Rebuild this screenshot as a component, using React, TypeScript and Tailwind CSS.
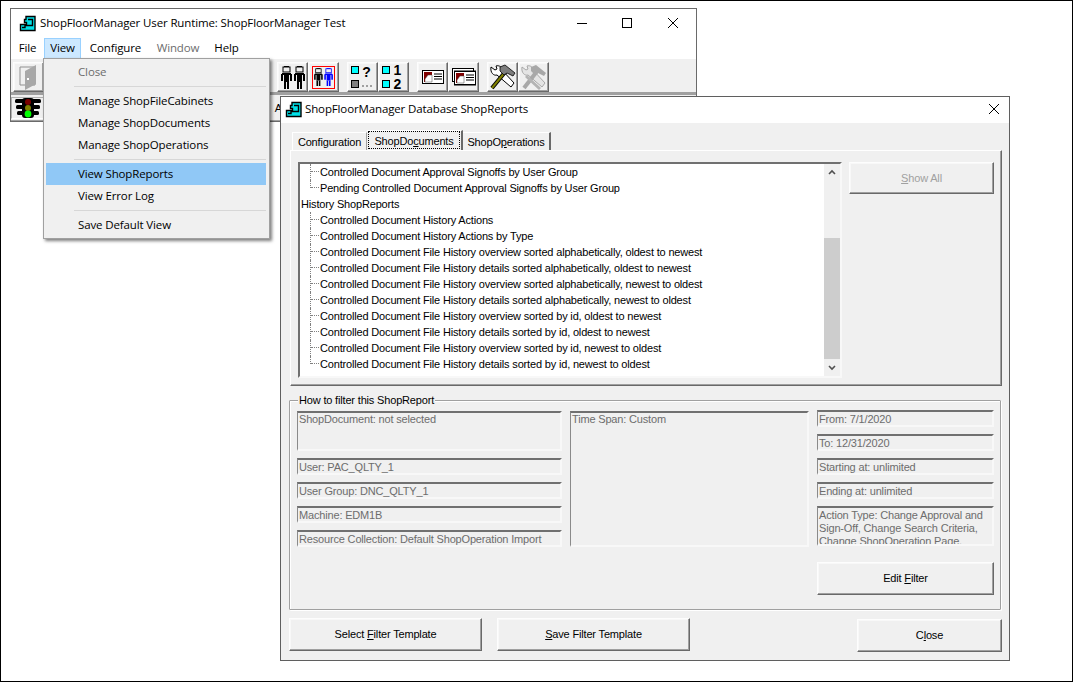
import React from 'react';

const raised = 'border border-t-[#fdfdfd] border-l-[#fdfdfd] border-r-[#696969] border-b-[#696969] shadow-[inset_-1px_-1px_0_#a0a0a0,inset_1px_1px_0_#f8f8f8] bg-[#f0f0f0]';
const sunken = 'border-2 border-t-[#707070] border-l-[#8a8a8a] border-r-[#f8f8f8] border-b-[#f8f8f8] border-l-[1.5px]';
const uiFont = "font-['Open_Sans',sans-serif] text-[11.500px] tracking-[-0.130px]";

const AppIcon: React.FC = () => (
    <svg width="18" height="17" viewBox="0 0 18 17" className="shrink-0">
        <path d="M7 1.5h9v14H1.5v-6h6v-2h-2V4.500h1.500z" fill="#00e0e8" stroke="#000" strokeWidth="1.4" />
        <path d="M9 4.500h4.500v6H6v2H3" fill="none" stroke="#000" strokeWidth="1.400" />
    </svg>
);

const Person: React.FC<{ color?: string }> = ({ color = '#000' }) => (
    <g fill={color}>
        <rect x="3" y="0" width="5" height="1" />
        <rect x="2" y="1" width="7" height="5" fill="none" stroke={color} strokeWidth="1" />
        <rect x="1" y="7" width="9" height="2" />
        <rect x="0" y="8" width="2" height="7" />
        <rect x="9" y="8" width="2" height="7" />
        <rect x="3" y="8" width="5" height="8" />
        <rect x="3" y="16" width="2" height="7" />
        <rect x="6" y="16" width="2" height="7" />
    </g>
);

const People: React.FC = () => (
    <svg width="24" height="23" viewBox="0 0 24 23">
        <Person />
        <g transform="translate(13 0)"><Person /></g>
    </svg>
);

const PeopleSelected: React.FC = () => (
    <span className="flex h-[23px] w-[23px] items-center justify-center border border-[#ff0000]">
        <svg width="19" height="18" viewBox="0 0 24 23">
            <Person />
            <g transform="translate(13 0)"><Person color="#0000ff" /></g>
        </svg>
    </span>
);

const Square: React.FC<{ color: string }> = ({ color }) => (
    <span className={`block h-[8px] w-[8px] border border-black ${color}`} />
);

const QuestionIcon: React.FC = () => (
    <span className="flex h-[24px] w-[24px] gap-[3px] font-['Liberation_Sans',sans-serif] font-bold tracking-normal">
        <span className="flex flex-col justify-between py-[1px]">
            <Square color="bg-[#00ffff]" />
            <Square color="bg-[#808080]" />
        </span>
        <span className="flex flex-col items-center justify-between">
            <span className="text-[14px] leading-[14px]">?</span>
            <span className="flex gap-[2px] pb-[2px]">
                <span className="h-[2px] w-[2px] bg-[#a0a0a0]" />
                <span className="h-[2px] w-[2px] bg-[#a0a0a0]" />
                <span className="h-[2px] w-[2px] bg-[#a0a0a0]" />
            </span>
        </span>
    </span>
);

const NumberIcon: React.FC = () => (
    <span className="flex h-[28px] w-[24px] gap-[4px] font-['Liberation_Sans',sans-serif] font-bold tracking-normal">
        <span className="flex flex-col justify-between py-[3px]">
            <Square color="bg-[#00ffff]" />
            <Square color="bg-[#00ffff]" />
        </span>
        <span className="flex flex-col">
            <span className="text-[14px] leading-[14px]">1</span>
            <span className="text-[14px] leading-[14px]">2</span>
        </span>
    </span>
);

const Card: React.FC = () => (
    <g>
        <rect x="0.500" y="0.500" width="21" height="13" fill="#fff" stroke="#000" />
        <rect x="2" y="2" width="8" height="10" fill="#800000" />
        <path d="M6 5h4v7H3V9z" fill="#fff" stroke="#444" strokeWidth="0.500" />
        <path d="M12 4h8M12 6.500h8M12 9h8" stroke="#000" strokeWidth="1" />
    </g>
);

const CardIcon: React.FC = () => (
    <svg width="22" height="14" viewBox="0 0 22 14"><Card /></svg>
);

const CardsIcon: React.FC = () => (
    <svg width="24" height="18" viewBox="0 0 24 18">
        <rect x="0.500" y="0.500" width="21" height="13" fill="#fff" stroke="#000" />
        <rect x="2.500" y="3" width="21" height="14" fill="#fff" stroke="#000" />
        <g transform="translate(2 3)"><Card /></g>
    </svg>
);

const ToolsIcon: React.FC = () => (
    <svg width="27" height="27" viewBox="0 0 27 27">
        <path d="M2 3l4 3 2-1-1-3c3-1 6 1 6 4l12 13-3 4L8 11C5 12 1 9 2 3z" fill="#fff" stroke="#000" />
        <path d="M3 24L17 7" stroke="#000" strokeWidth="4" />
        <path d="M3 24L17 7" stroke="#808000" strokeWidth="2" />
        <path d="M11 3l5-2 10 8-2 3-6-3-3 2-4-4z" fill="#7d7d7d" stroke="#000" strokeWidth="0.800" />
    </svg>
);

const ToolsDisabledIcon: React.FC = () => (
    <svg width="27" height="27" viewBox="0 0 27 27">
        <path d="M2 3l4 3 2-1-1-3c3-1 6 1 6 4l12 13-3 4L8 11C5 12 1 9 2 3z" fill="#e4e4e4" stroke="#a8a8a8" />
        <path d="M4 24L18 6" stroke="#a8a8a8" strokeWidth="4" />
        <path d="M6 12L20 25" stroke="#b4b4b4" strokeWidth="3" />
        <path d="M11 3l5-2 10 8-2 3-6-3-3 2-4-4z" fill="#a8a8a8" />
    </svg>
);

const DoorIcon: React.FC = () => (
    <svg width="20" height="27" viewBox="0 0 20 27">
        <path d="M1 3h15v18H1z" fill="#f0f0f0" stroke="#909090" />
        <path d="M6 7l11-6v19l-11 6z" fill="#a8a8a8" />
        <rect x="8" y="14" width="2" height="2" fill="#fff" />
    </svg>
);

const TrafficLight: React.FC = () => (
    <svg width="26" height="20" viewBox="0 0 26 20">
        <rect x="0" y="1" width="26" height="4" rx="1.500" fill="#000" />
        <rect x="1" y="7" width="24" height="4" rx="1.500" fill="#000" />
        <rect x="2" y="13" width="22" height="4" rx="1.500" fill="#000" />
        <rect x="7" y="0" width="12" height="20" rx="3" fill="#000" />
        <circle cx="13" cy="4" r="3" fill="#7a0000" />
        <circle cx="13" cy="10" r="3" fill="#7f7f00" />
        <circle cx="13" cy="16" r="3.400" fill="#00ff00" />
    </svg>
);

const CloseGlyph: React.FC = () => (
    <svg width="10" height="10" viewBox="0 0 10 10"><path d="M0 0l10 10M10 0L0 10" stroke="#000" strokeWidth="1" /></svg>
);

const ToolButton: React.FC<{ className?: string; children: React.ReactNode }> = ({ className = '', children }) => (
    <div className={`${raised} flex h-[30px] w-[31px] shrink-0 items-center justify-center ${className}`}>{children}</div>
);

const MenuItem: React.FC<{ label: string; disabled?: boolean; active?: boolean }> = ({ label, disabled, active }) => (
    <div className={`flex h-[22px] items-center pl-[32px] ${active ? 'bg-[#90c8f6]' : ''} ${disabled ? 'text-[#6d6d6d]' : 'text-black'}`}>{label}</div>
);

const MenuSeparator: React.FC = () => (
    <div className="flex h-[7px] items-center pl-[28px]"><div className="h-px w-full bg-[#d7d7d7]" /></div>
);

const TreeChild: React.FC<{ label: string; last?: boolean }> = ({ label, last }) => (
    <div className="flex h-[16px] items-stretch pl-[10px]">
        <span className={`w-[9px] shrink-0 border-l border-dotted border-[#808080] ${last ? 'h-[8px]' : ''}`}>
            <span className="block h-[8px] border-b border-dotted border-[#808080]" />
        </span>
        <span className="whitespace-nowrap pl-[1px] leading-[16px]">{label}</span>
    </div>
);

const Field: React.FC<{ className?: string; children: React.ReactNode }> = ({ className = '', children }) => (
    <div className={`${sunken} overflow-hidden px-px text-[#6d6d6d] ${className}`}>{children}</div>
);

const DialogButton: React.FC<{ className?: string; disabled?: boolean; children: React.ReactNode }> = ({ className = '', disabled, children }) => (
    <div className={`${raised} flex items-center justify-center ${disabled ? 'text-[#a0a0a0]' : 'text-black'} ${className}`}>
        <span>{children}</span>
    </div>
);

const historyReports = [
    'Controlled Document History Actions',
    'Controlled Document History Actions by Type',
    'Controlled Document File History overview sorted alphabetically, oldest to newest',
    'Controlled Document File History details sorted alphabetically, oldest to newest',
    'Controlled Document File History overview sorted alphabetically, newest to oldest',
    'Controlled Document File History details sorted alphabetically, newest to oldest',
    'Controlled Document File History overview sorted by id, oldest to newest',
    'Controlled Document File History details sorted by id, oldest to newest',
    'Controlled Document File History overview sorted by id, newest to oldest',
    'Controlled Document File History details sorted by id, newest to oldest',
];

const App: React.FC = () => {
    return (
        <div className="relative h-[682px] w-[1073px] overflow-hidden border border-black bg-white font-['Liberation_Sans',sans-serif] text-[11px] tracking-[-0.170px] text-black">
            {/* Main runtime window */}
            <div className={`absolute left-[9px] top-[7px] flex h-[114px] w-[687px] flex-col border border-[#6a6a6a] bg-white ${uiFont}`}>
                <div className="flex h-[27px] shrink-0 items-center pl-[8px] pt-[1px]">
                    <AppIcon />
                    <span className="ml-[3px]">ShopFloorManager User Runtime: ShopFloorManager Test</span>
                    <div className="ml-auto flex items-center">
                        <div className="h-px w-[10px] bg-black" />
                        <div className="ml-[35px] h-[10px] w-[10px] border border-black" />
                        <div className="ml-[36px] mr-[18px]"><CloseGlyph /></div>
                    </div>
                </div>
                <div className="flex h-[23px] shrink-0 items-stretch pt-[2px]">
                    <div className="flex w-[33px] items-center justify-center pb-[2px]">File</div>
                    <div className="flex w-[37px] items-center justify-center border border-[#99d1ff] bg-[#cce8ff] pb-[2px]">View</div>
                    <div className="flex w-[69px] items-center justify-center pb-[2px]">Configure</div>
                    <div className="flex w-[56px] items-center justify-center pb-[2px] text-[#6d6d6d]">Window</div>
                    <div className="flex w-[41px] items-center justify-center pb-[2px]">Help</div>
                </div>
                <div className="flex flex-1 flex-col bg-[#f0f0f0]">
                    <div className="flex h-[33px] shrink-0 items-start pl-[2px] pt-[3px]">
                        <ToolButton><DoorIcon /></ToolButton>
                        <ToolButton className="ml-[233px]"><People /></ToolButton>
                        <ToolButton><PeopleSelected /></ToolButton>
                        <ToolButton className="ml-[8px]"><QuestionIcon /></ToolButton>
                        <ToolButton><NumberIcon /></ToolButton>
                        <ToolButton className="ml-[8px]"><CardIcon /></ToolButton>
                        <ToolButton><CardsIcon /></ToolButton>
                        <ToolButton className="ml-[8px]"><ToolsIcon /></ToolButton>
                        <ToolButton><ToolsDisabledIcon /></ToolButton>
                    </div>
                    <div className="h-[3px] shrink-0 bg-[#a0a0a0]" />
                    <div className="flex flex-1 items-stretch pb-[1px] pt-[2px]">
                        <div className="flex w-[33px] items-center justify-center border border-t-[#b0b0b0] border-l-[#b0b0b0] border-r-white border-b-white">
                            <TrafficLight />
                        </div>
                        <div className="ml-auto mr-[414px] self-center font-['Liberation_Sans',sans-serif] text-[11px]">A</div>
                    </div>
                    <div className="h-[1px] shrink-0 bg-[#a0a0a0]" />
                </div>
            </div>

            {/* View menu */}
            <div className={`absolute left-[42px] top-[57px] z-20 h-[181px] w-[227px] border border-[#a0a0a0] bg-[#f0f0f0] py-[2px] pl-[2px] pr-[3px] shadow-[2px_2px_3px_rgba(0,0,0,0.5)] ${uiFont}`}>
                <MenuItem label="Close" disabled />
                <MenuSeparator />
                <MenuItem label="Manage ShopFileCabinets" />
                <MenuItem label="Manage ShopDocuments" />
                <MenuItem label="Manage ShopOperations" />
                <MenuSeparator />
                <MenuItem label="View ShopReports" active />
                <MenuItem label="View Error Log" />
                <MenuSeparator />
                <MenuItem label="Save Default View" />
            </div>

            {/* ShopReports dialog */}
            <div className="absolute left-[279px] top-[95px] z-10 flex h-[565px] w-[730px] flex-col border border-[#5f5f5f] bg-[#f0f0f0]">
                <div className={`flex h-[26px] shrink-0 items-center bg-white pb-[2px] pl-[4px] ${uiFont}`}>
                    <AppIcon />
                    <span className="ml-[2px]">ShopFloorManager Database ShopReports</span>
                    <div className="ml-auto mr-[10px]"><CloseGlyph /></div>
                </div>

                {/* Tabs */}
                <div className="mt-[7px] flex h-[20px] shrink-0 items-end pl-[11px]">
                    <div className="flex h-[18px] w-[75px] items-center justify-center border-l border-t border-r border-l-white border-t-white border-r-[#a0a0a0] pt-[2px]">Configuration</div>
                    <div className="flex h-[20px] w-[96px] items-center justify-center border-r-2 border-t border-t-white border-r-[#696969] px-[1px] pb-[1px]">
                        <span className="flex h-full w-full items-center justify-center border border-dotted border-black pt-[2px]">ShopDo<u>c</u>uments</span>
                    </div>
                    <div className="flex h-[18px] w-[88px] items-center justify-center border-r-2 border-t border-t-white border-r-[#696969] pt-[2px]">ShopO<u>p</u>erations</div>
                </div>

                <div className="ml-[9px] flex h-[236px] w-[712px] shrink-0 gap-[7px] border border-t-white border-l-white border-r-[#696969] border-b-[#696969] pl-[7px] pt-[11px] shadow-[inset_-1px_-1px_0_#a0a0a0]">
                    {/* Report tree */}
                    <div className="flex h-[216px] w-[544px] shrink-0 border-2 border-t-[#707070] border-l-[#707070] border-r-[#f8f8f8] border-b-[#f8f8f8] bg-white">
                        <div className="min-w-0 flex-1 overflow-hidden">
                            <TreeChild label="Controlled Document Approval Signoffs by User Group" />
                            <TreeChild label="Pending Controlled Document Approval Signoffs by User Group" last />
                            <div className="h-[16px] pl-[1px] leading-[16px]">History ShopReports</div>
                            {historyReports.map((report, i) => (
                                <TreeChild key={report} label={report} last={i === historyReports.length - 1} />
                            ))}
                        </div>
                        <div className="flex w-[16px] shrink-0 flex-col bg-[#f0f0f0]">
                            <div className="flex h-[17px] items-center justify-center">
                                <svg width="8" height="6" viewBox="0 0 8 6"><path d="M1 5l3-3 3 3" fill="none" stroke="#505050" strokeWidth="1.600" /></svg>
                            </div>
                            <div className="mt-[57px] h-[122px] bg-[#cdcdcd]" />
                            <div className="mt-auto flex h-[17px] items-center justify-center">
                                <svg width="8" height="6" viewBox="0 0 8 6"><path d="M1 1l3 3 3-3" fill="none" stroke="#505050" strokeWidth="1.600" /></svg>
                            </div>
                        </div>
                    </div>
                    <DialogButton disabled className="h-[32px] w-[145px]"><u>S</u>how All</DialogButton>
                </div>

                {/* Filter group */}
                <div className="relative ml-[8px] mt-[14px] h-[210px] w-[712px] shrink-0 rounded-[1px] border border-[#a0a0a0] shadow-[inset_1px_1px_0_#fff,1px_1px_0_#fff]">
                    <div className="absolute left-[8px] top-[-8px] bg-[#f0f0f0] px-px leading-[14px]">How to filter this ShopReport</div>
                    <div className="grid grid-cols-[265px_239px_177px] gap-x-[8px] pl-[7px] pt-[10px]">
                        <div className="flex flex-col">
                            <Field className="h-[40px] leading-[13px]">ShopDocument: not selected</Field>
                            <Field className="mt-[7px] h-[17px] leading-[14px]">User: PAC_QLTY_1</Field>
                            <Field className="mt-[7px] h-[17px] leading-[14px]">User Group: DNC_QLTY_1</Field>
                            <Field className="mt-[7px] h-[17px] leading-[14px]">Machine: EDM1B</Field>
                            <Field className="mt-[7px] h-[17px] leading-[14px]">Resource Collection: Default ShopOperation Import</Field>
                        </div>
                        <Field className="h-[136px] leading-[13px]">Time Span: Custom</Field>
                        <div className="-mt-[1px] flex flex-col">
                            <Field className="h-[17px] leading-[14px]">From: 7/1/2020</Field>
                            <Field className="mt-[7px] h-[17px] leading-[14px]">To: 12/31/2020</Field>
                            <Field className="mt-[7px] h-[17px] leading-[14px]">Starting at: unlimited</Field>
                            <Field className="mt-[7px] h-[17px] leading-[14px]">Ending at: unlimited</Field>
                            <Field className="mt-[7px] h-[40px] pt-[1px] leading-[13px]">Action Type: Change Approval and Sign-Off, Change Search Criteria, Change ShopOperation Page,</Field>
                            <DialogButton className="mt-[16px] h-[33px] w-[177px]">Edit <u>F</u>ilter</DialogButton>
                        </div>
                    </div>
                </div>

                {/* Bottom buttons */}
                <div className="ml-[8px] mt-[8px] flex shrink-0 items-start">
                    <DialogButton className="h-[33px] w-[193px]">Select <u>F</u>ilter Template</DialogButton>
                    <DialogButton className="ml-[15px] h-[33px] w-[193px]"><u>S</u>ave Filter Template</DialogButton>
                    <DialogButton className="ml-[167px] mt-[1px] h-[33px] w-[145px]">C<u>l</u>ose</DialogButton>
                </div>
            </div>
        </div>
    );
};

export default App;
